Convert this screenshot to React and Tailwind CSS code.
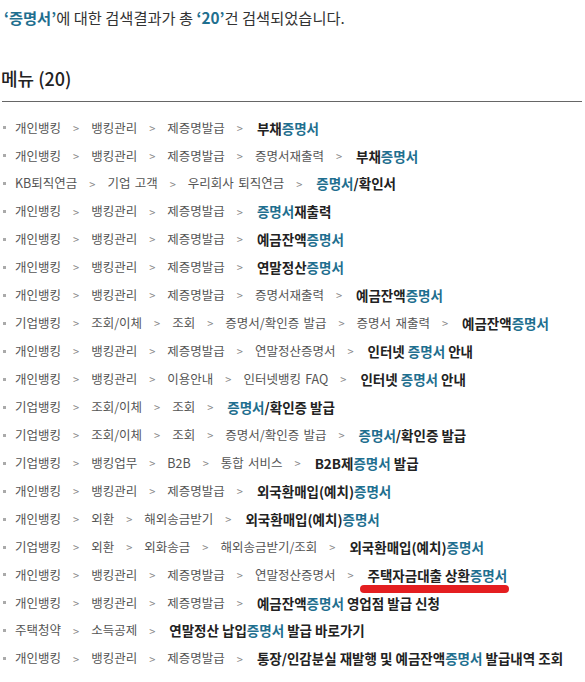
import React from 'react';

const rows = [
    { path: ['개인뱅킹', '뱅킹관리', '제증명발급'], title: '부채증명서' },
    { path: ['개인뱅킹', '뱅킹관리', '제증명발급', '증명서재출력'], title: '부채증명서' },
    { path: ['KB퇴직연금', '기업 고객', '우리회사 퇴직연금'], title: '증명서/확인서' },
    { path: ['개인뱅킹', '뱅킹관리', '제증명발급'], title: '증명서재출력' },
    { path: ['개인뱅킹', '뱅킹관리', '제증명발급'], title: '예금잔액증명서' },
    { path: ['개인뱅킹', '뱅킹관리', '제증명발급'], title: '연말정산증명서' },
    { path: ['개인뱅킹', '뱅킹관리', '제증명발급', '증명서재출력'], title: '예금잔액증명서' },
    { path: ['기업뱅킹', '조회/이체', '조회', '증명서/확인증 발급', '증명서 재출력'], title: '예금잔액증명서' },
    { path: ['개인뱅킹', '뱅킹관리', '제증명발급', '연말정산증명서'], title: '인터넷 증명서 안내' },
    { path: ['개인뱅킹', '뱅킹관리', '이용안내', '인터넷뱅킹 FAQ'], title: '인터넷 증명서 안내' },
    { path: ['기업뱅킹', '조회/이체', '조회'], title: '증명서/확인증 발급' },
    { path: ['기업뱅킹', '조회/이체', '조회', '증명서/확인증 발급'], title: '증명서/확인증 발급' },
    { path: ['기업뱅킹', '뱅킹업무', 'B2B', '통합 서비스'], title: 'B2B제증명서 발급' },
    { path: ['개인뱅킹', '뱅킹관리', '제증명발급'], title: '외국환매입(예치)증명서' },
    { path: ['개인뱅킹', '외환', '해외송금받기'], title: '외국환매입(예치)증명서' },
    { path: ['기업뱅킹', '외환', '외화송금', '해외송금받기/조회'], title: '외국환매입(예치)증명서' },
    { path: ['개인뱅킹', '뱅킹관리', '제증명발급', '연말정산증명서'], title: '주택자금대출 상환증명서', marked: true },
    { path: ['개인뱅킹', '뱅킹관리', '제증명발급'], title: '예금잔액증명서 영업점 발급 신청' },
    { path: ['주택청약', '소득공제'], title: '연말정산 납입증명서 발급 바로가기' },
    { path: ['개인뱅킹', '뱅킹관리', '제증명발급'], title: '통장/인감분실 재발행 및 예금잔액증명서 발급내역 조회' },
];

const Title = ({ text }) => {
    const parts = text.split('증명서');
    return (
        <span className="font-bold text-[#222] text-[13.5px]">
            {parts.map((p, i) => (
                <React.Fragment key={i}>
                    {p}
                    {i < parts.length - 1 && <span className="text-[#1f6f8f]">증명서</span>}
                </React.Fragment>
            ))}
        </span>
    );
};

const Sep = () => <span className="text-[#888] text-[11px] mx-[12px]">&gt;</span>;

export default function App() {
    return (
        <div className="w-[585px] h-[682px] overflow-hidden bg-white px-[3px] text-[#555]" style={{ fontFamily: '"Noto Sans CJK KR", "Noto Sans", sans-serif' }}>
            <p className="text-[15.3px] leading-[20px] pt-[7px] pl-[1px] text-[#333]">
                <span className="font-bold text-[#1f6f8f]">‘증명서’</span>에 대한 검색결과가 총 <span className="font-bold text-[#1f6f8f]">‘20’</span>건 검색되었습니다.
            </p>

            <h2 className="text-[18px] leading-[26px] mt-[38px] -ml-[2px] text-[#222] font-medium">메뉴 (20)</h2>
            <div className="mt-[10px] -ml-[1px] border-t border-[#666]" />

            <ul className="pt-[12px]">
                {rows.map((r, idx) => (
                    <li key={idx} className="relative flex items-center h-[27.95px] whitespace-nowrap">
                        <span className="w-[3px] h-[3px] bg-[#aaa] mr-[9px] shrink-0" />
                        <span className="text-[12.5px] flex items-center [word-spacing:1.5px]">
                            {r.path.map((p, i) => (
                                <React.Fragment key={i}>
                                    <span>{p}</span>
                                    <Sep />
                                </React.Fragment>
                            ))}
                            <span className="relative ml-[2px] [word-spacing:0px]">
                                <Title text={r.title} />
                                {r.marked && (
                                    <span className="absolute left-[-8px] right-[-2px] top-[20px] h-[8px] rounded-full bg-[#e41e20]" />
                                )}
                            </span>
                        </span>
                    </li>
                ))}
            </ul>
        </div>
    );
}
